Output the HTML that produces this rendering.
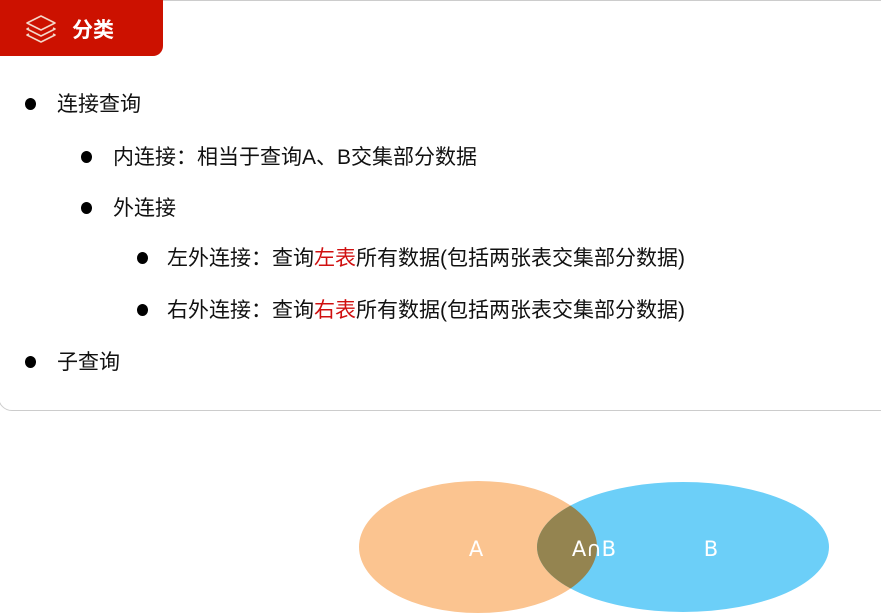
<!DOCTYPE html>
<html><head><meta charset="utf-8"><style>
html,body{margin:0;padding:0;width:881px;height:615px;overflow:hidden;background:#fff;font-family:"Liberation Sans","Noto Sans CJK SC",sans-serif;color:#111}
.card{position:absolute;left:-2px;top:0;width:900px;height:411px;border:1px solid #ccc;border-radius:0 0 0 14px;box-sizing:border-box}
.tab{position:absolute;left:0;top:0;width:163px;height:56px;background:#cc1100;border-radius:0 0 10px 0}
.tab span{position:absolute;left:72px;top:14px;color:#fff;font-size:21px;font-weight:bold}
.t{position:absolute;font-size:21px;line-height:26px;white-space:nowrap}
.d{position:absolute;width:11px;height:12px;border-radius:50%;background:#000}
.r{color:#d01010}
</style></head><body>
<div class="card"></div>
<div class="tab"><span>分类</span></div>
<svg style="position:absolute;left:0;top:0" width="881" height="615">
<g fill="none" stroke="#f4d6c8" stroke-width="1.6" stroke-linejoin="round">
<path d="M41 16 L55 23 L41 30 L27 23 Z"/>
<path d="M29 28 L27 29 L41 36 L55 29 L53 28"/>
<path d="M29 34 L27 35 L41 42 L55 35 L53 34"/>
</g>
<defs><clipPath id="ca"><ellipse cx="478" cy="547" rx="119" ry="66"/></clipPath></defs>
<ellipse cx="478" cy="547" rx="119" ry="66" fill="#fbc490"/>
<ellipse cx="683" cy="547" rx="146" ry="65" fill="#6ccff8"/>
<ellipse cx="683" cy="547" rx="146" ry="65" fill="#948450" clip-path="url(#ca)"/>
<g fill="#fff" font-family="DejaVu Sans, sans-serif" font-size="21" text-anchor="middle">
<text x="476" y="556">A</text><text x="594" y="556">A∩B</text><text x="711" y="556">B</text></g>
</svg>
<div class="d" style="left:25px;top:98px"></div><div class="t" style="left:57px;top:92px">连接查询</div>
<div class="d" style="left:81px;top:151px"></div><div class="t" style="left:113px;top:145px">内连接：相当于查询A、B交集部分数据</div>
<div class="d" style="left:81px;top:202px"></div><div class="t" style="left:113px;top:196px">外连接</div>
<div class="d" style="left:137px;top:252px"></div><div class="t" style="left:167px;top:246px">左外连接：查询<span class="r">左表</span>所有数据(包括两张表交集部分数据)</div>
<div class="d" style="left:137px;top:304px"></div><div class="t" style="left:167px;top:298px">右外连接：查询<span class="r">右表</span>所有数据(包括两张表交集部分数据)</div>
<div class="d" style="left:25px;top:356px"></div><div class="t" style="left:57px;top:350px">子查询</div>
</body></html>
